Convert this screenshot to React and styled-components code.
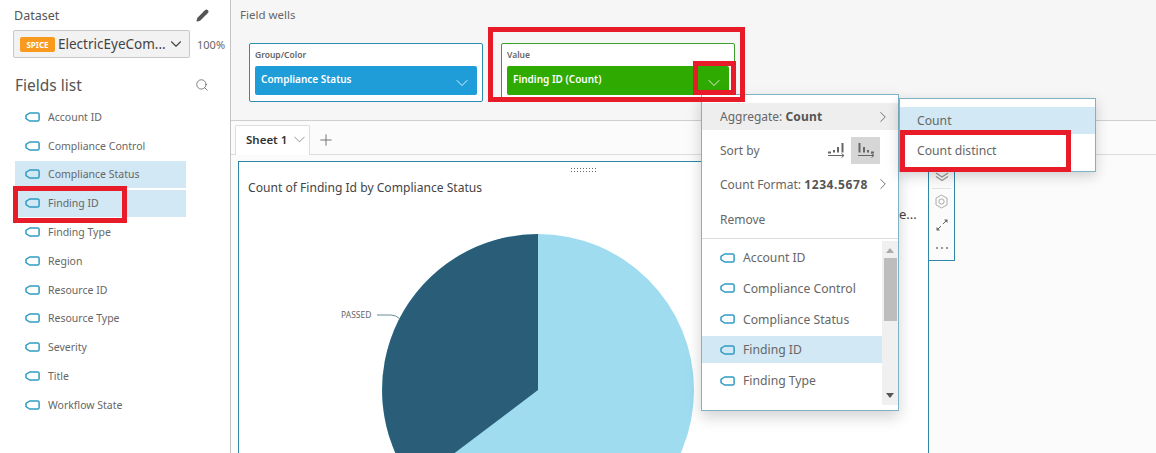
import React from "react";
import styled, { createGlobalStyle } from "styled-components";
import { ChevronDown, ChevronRight, Pencil, Plus, Search } from "lucide-react";

const fields = [
  "Account ID",
  "Compliance Control",
  "Compliance Status",
  "Finding ID",
  "Finding Type",
  "Region",
  "Resource ID",
  "Resource Type",
  "Severity",
  "Title",
  "Workflow State",
];

const menuFields = ["Account ID", "Compliance Control", "Compliance Status", "Finding ID", "Finding Type"];

const FieldIcon = () => (
  <svg width="15" height="10" viewBox="0 0 15 10" fill="none">
    <path d="M4.6 1H12.6a1.5 1.5 0 0 1 1.5 1.5V7.5a1.5 1.5 0 0 1-1.5 1.5H4.6L1 6.6V3.4Z" stroke="#2f9cc4" strokeWidth="1.5" strokeLinejoin="round" />
  </svg>
);

const SortAsc = () => (
  <svg width="18" height="18" viewBox="0 0 18 18" fill="none" stroke="#666">
    <path d="M1 14.5H17M14.5 12.5l2.5 2-2.5 2" strokeWidth="1" />
    <path d="M1 11.5h3M7 11.5V9M11 11.5V6M15.5 11.5V2" strokeWidth="2" />
  </svg>
);

const SortDesc = () => (
  <svg width="18" height="18" viewBox="0 0 18 18" fill="none" stroke="#666">
    <path d="M1 14.5H17M14.5 12.5l2.5 2-2.5 2" strokeWidth="1" />
    <path d="M2.5 11.5V2M7 11.5V6M11 11.5V9M14 11.5h3" strokeWidth="2" />
  </svg>
);

const DoubleChevron = () => (
  <svg width="14" height="10" viewBox="0 0 14 10" fill="none" stroke="#999" strokeWidth="1.3">
    <path d="M1 1l6 4 6-4M1 4.5l6 4 6-4" />
  </svg>
);

const HexIcon = () => (
  <svg width="13" height="15" viewBox="0 0 13 15" fill="none" stroke="#aaa" strokeWidth="1">
    <path d="M6.5 1L12 4.2V10.8L6.5 14 1 10.8V4.2Z" />
    <circle cx="6.5" cy="7.5" r="2.6" />
  </svg>
);

const ExpandIcon = () => (
  <svg width="12" height="12" viewBox="0 0 12 12" fill="#666" stroke="#666" strokeWidth="1">
    <path d="M7 5l4-4M1 11l4-4" />
    <path d="M8 .5h3.5V4ZM.5 8V11.5H4Z" strokeWidth="0" />
  </svg>
);

const DotsIcon = () => (
  <svg width="14" height="4" viewBox="0 0 14 4" fill="#777">
    <circle cx="2" cy="2" r="1" />
    <circle cx="7" cy="2" r="1" />
    <circle cx="12" cy="2" r="1" />
  </svg>
);

const App = () => (
  <Page>
    <GlobalStyle />
    <Sidebar>
      <DatasetHead>
        <span>Dataset</span>
        <Pencil size={13} fill="#555" color="#555" />
      </DatasetHead>
      <DatasetRow>
        <DatasetSelect>
          <Spice>SPICE</Spice>
          <DatasetName>ElectricEyeCom...</DatasetName>
          <ChevronDown size={18} strokeWidth={1.5} color="#444" />
        </DatasetSelect>
        <Zoom>100%</Zoom>
      </DatasetRow>
      <ListHead>
        <h2>Fields list</h2>
        <Search size={14} strokeWidth={1.4} color="#666" />
      </ListHead>
      <FieldList>
        {fields.map((f) => (
          <FieldRow key={f} $selected={f === "Compliance Status" || f === "Finding ID"}>
            <FieldIcon />
            <span>{f}</span>
          </FieldRow>
        ))}
      </FieldList>
      <Callout $x={13} $y={186} $w={114} $h={37} />
    </Sidebar>

    <Main>
      <Wells>
        <WellsTitle>Field wells</WellsTitle>
        <WellRow>
          <Well $color="#2b8db3">
            <WellLabel>Group/Color</WellLabel>
            <Pill $color="#1f9dd9">
              <span>Compliance Status</span>
              <ChevronDown size={20} strokeWidth={1} color="#fff" />
            </Pill>
          </Well>
          <Well $color="#3aa02a">
            <WellLabel>Value</WellLabel>
            <Pill $color="#2faa00">
              <span>Finding ID (Count)</span>
              <ChevronDown size={20} strokeWidth={1} color="#fff" />
            </Pill>
          </Well>
        </WellRow>
      </Wells>

      <Tabs>
        <Tab>
          <span>Sheet 1</span>
          <ChevronDown size={19} strokeWidth={1} color="#777" />
        </Tab>
        <AddSheet>
          <Plus size={18} strokeWidth={1.2} color="#666" />
        </AddSheet>
      </Tabs>

      <Canvas>
        <Visual>
          <DragHandle />
          <VisualTitle>Count of Finding Id by Compliance Status</VisualTitle>
          <Chart width="400" height="240" viewBox="0 0 400 240">
            <circle cx="238" cy="157" r="156" fill="#9fdcf0" />
            <path d="M238 157V1A156 156 0 0 0 113.6 251Z" fill="#2a5d78" />
            <text x="41" y="85" fontSize="8.5" fill="#666">PASSED</text>
            <path d="M77 82h14q5 0 9 4" fill="none" stroke="#6c8b99" />
          </Chart>
          <LegendText>e...</LegendText>
        </Visual>
        <VisualTools>
          <ToolCell $h={24} $divider><DoubleChevron /></ToolCell>
          <ToolCell $h={24}><HexIcon /></ToolCell>
          <ToolCell $h={24}><ExpandIcon /></ToolCell>
          <ToolCell $h={22}><DotsIcon /></ToolCell>
        </VisualTools>
      </Canvas>
    </Main>

    <Menu>
      <MenuRow $bg="#eeeeee" $h={27}>
        <span>Aggregate: <b>Count</b></span>
        <ChevronRight size={18} strokeWidth={1} color="#444" />
      </MenuRow>
      <SortRow>
        <span>Sort by</span>
        <SortIcons>
          <SortBtn><SortAsc /></SortBtn>
          <SortBtn $active><SortDesc /></SortBtn>
        </SortIcons>
      </SortRow>
      <MenuRow $h={28}>
        <span>Count Format: <FormatValue>1234.5678</FormatValue></span>
        <ChevronRight size={18} strokeWidth={1} color="#444" />
      </MenuRow>
      <RemoveRow>Remove</RemoveRow>
      <MenuList>
        <MenuItems>
          {menuFields.map((f) => (
            <MenuItem key={f} $selected={f === "Finding ID"}>
              <FieldIcon />
              <span>{f}</span>
            </MenuItem>
          ))}
        </MenuItems>
        <Scrollbar>
          <ScrollArrow $up />
          <ScrollTrack><ScrollThumb /></ScrollTrack>
          <ScrollArrow />
        </Scrollbar>
      </MenuList>
    </Menu>

    <SubMenu>
      <SubItem $selected>Count</SubItem>
      <SubItem>Count distinct</SubItem>
    </SubMenu>

    <Callout $x={488} $y={27} $w={257} $h={75} />
    <Callout $x={693} $y={61} $w={43} $h={34} />
    <Callout $x={900} $y={130} $w={171} $h={42} />
  </Page>
);

const GlobalStyle = createGlobalStyle`
  html, body {
    margin: 0;
    height: 453px;
    overflow: hidden;
    background: #fff;
  }
  * {
    box-sizing: border-box;
  }
`;

const Page = styled.div`
  position: relative;
  display: flex;
  width: 1156px;
  height: 453px;
  overflow: hidden;
  font-family: "Noto Sans", "Open Sans", sans-serif;
  color: #555;
`;

const Sidebar = styled.aside`
  width: 231px;
  flex: none;
  padding: 5px 0 0 13px;
  background: #fff;
  border-right: 1px solid #c4c4c4;
`;

const DatasetHead = styled.div`
  display: flex;
  justify-content: space-between;
  align-items: center;
  width: 196px;
  height: 20px;
  padding-left: 1px;
  font-size: 12.5px;
`;

const DatasetRow = styled.div`
  display: flex;
  align-items: center;
  margin-top: 5px;
  gap: 7px;
`;

const DatasetSelect = styled.div`
  display: flex;
  align-items: center;
  width: 177px;
  height: 28px;
  padding: 0 4px 0 6px;
  background: #f2f2f2;
  border: 1px solid #c8c8c8;
  border-radius: 2px;
`;

const Spice = styled.span`
  width: 35px;
  height: 15px;
  flex: none;
  background: #f79a1e;
  color: #fff;
  border-radius: 2px;
  font-size: 8px;
  font-weight: 700;
  line-height: 15px;
  text-align: center;
`;

const DatasetName = styled.span`
  flex: 1;
  margin-left: 3px;
  font-size: 13.5px;
  color: #444;
  white-space: nowrap;
`;

const Zoom = styled.span`
  font-size: 11px;
  color: #666;
`;

const ListHead = styled.div`
  display: flex;
  justify-content: space-between;
  align-items: center;
  width: 196px;
  margin-top: 15px;
  padding-left: 2px;
  h2 {
    margin: 0;
    font-size: 15.5px;
    line-height: 24px;
    font-weight: 400;
    color: #555;
  }
`;

const FieldList = styled.div`
  display: flex;
  flex-direction: column;
  margin: 6.4px 0 0 2px;
  width: 171px;
`;

const FieldRow = styled.div`
  display: flex;
  align-items: center;
  gap: 8px;
  height: 27px;
  margin-bottom: 1.8px;
  padding-left: 10px;
  font-size: 10.5px;
  color: #666;
  background: ${(p) => (p.$selected ? "#d2e8f5" : "transparent")};
`;

const Main = styled.main`
  flex: 1;
  display: flex;
  flex-direction: column;
  min-width: 0;
`;

const Wells = styled.section`
  height: 121px;
  flex: none;
  padding: 5px 0 0 9px;
  background: #f6f6f6;
  border-bottom: 1px solid #cfcfcf;
`;

const WellsTitle = styled.div`
  height: 20px;
  font-size: 11.5px;
  line-height: 20px;
  color: #666;
`;

const WellRow = styled.div`
  display: flex;
  gap: 18px;
  margin: 18px 0 0 9px;
`;

const Well = styled.div`
  width: 234px;
  height: 59px;
  padding: 4px 5px 0;
  background: #fff;
  border: 1px solid ${(p) => p.$color};
  border-radius: 2px;
`;

const WellLabel = styled.div`
  height: 18px;
  font-size: 8.5px;
  font-weight: 600;
  line-height: 14px;
  color: #666;
`;

const Pill = styled.div`
  display: flex;
  justify-content: space-between;
  align-items: center;
  height: 29px;
  padding: 0 5px 0 6px;
  background: ${(p) => p.$color};
  border-radius: 2px;
  color: #fff;
  font-size: 10px;
  font-weight: 600;
  span {
    margin-top: -3px;
  }
  svg {
    margin-top: 5px;
  }
`;

const Tabs = styled.div`
  display: flex;
  align-items: flex-end;
  gap: 6px;
  height: 34px;
  flex: none;
  padding-left: 4px;
  background: #fbfbfb;
  border-bottom: 1px solid #ddd;
`;

const Tab = styled.div`
  display: flex;
  align-items: center;
  justify-content: space-between;
  width: 75px;
  height: 30px;
  margin-bottom: -1px;
  padding: 0 0 2px 10px;
  background: #fff;
  border: 1px solid #ddd;
  border-bottom: 0;
  border-radius: 2px 2px 0 0;
  font-size: 11.5px;
  font-weight: 600;
  color: #333;
`;

const AddSheet = styled.div`
  display: flex;
  align-items: center;
  height: 29px;
  margin-left: 1px;
`;

const Canvas = styled.div`
  flex: 1;
  display: flex;
  align-items: flex-start;
  padding: 6px 0 0 7px;
  background: #fbfbfb;
`;

const Visual = styled.div`
  position: relative;
  width: 691px;
  height: 320px;
  flex: none;
  background: #fff;
  border: 1px solid #2f86a6;
  border-bottom: 0;
`;

const DragHandle = styled.div`
  position: absolute;
  left: 331px;
  top: 5px;
  width: 28px;
  height: 7px;
  background-image: radial-gradient(#666 0.9px, transparent 1px);
  background-size: 3px 3px;
`;

const VisualTitle = styled.div`
  margin: 17px 0 0 9px;
  height: 18px;
  font-size: 12.1px;
  line-height: 18px;
  color: #444;
`;

const Chart = styled.svg`
  display: block;
  margin: 36px 0 0 61px;
  overflow: visible;
`;

const LegendText = styled.div`
  position: absolute;
  left: 660px;
  top: 43px;
  font-size: 13px;
  color: #444;
`;

const VisualTools = styled.div`
  display: flex;
  flex-direction: column;
  width: 26px;
  height: 100px;
  padding: 3px 0 0;
  background: #fbfbfb;
  border: 1px solid #2f86a6;
  border-left: 0;
`;

const ToolCell = styled.div`
  display: flex;
  align-items: center;
  justify-content: center;
  height: ${(p) => p.$h}px;
  flex: none;
  margin: 0 3px;
  border-bottom: ${(p) => (p.$divider ? "1px solid #e2e2e2" : "0")};
`;

const Menu = styled.div`
  position: absolute;
  left: 701px;
  top: 94px;
  width: 198px;
  height: 317px;
  padding-top: 8px;
  background: #fff;
  border: 1px solid #7fb2c9;
  box-shadow: 0 6px 14px rgba(0, 0, 0, 0.18);
  font-size: 12px;
  color: #666;
  b {
    font-weight: 700;
    letter-spacing: 0.2px;
    color: #555;
  }
`;

const FormatValue = styled.b`
  && {
    letter-spacing: 0.6px;
  }
`;

const MenuRow = styled.div`
  display: flex;
  align-items: center;
  justify-content: space-between;
  height: ${(p) => p.$h}px;
  padding: 0 6px 0 18px;
  background: ${(p) => p.$bg || "transparent"};
`;

const RemoveRow = styled.div`
  display: flex;
  align-items: center;
  height: 40px;
  padding: 2px 0 0 18px;
`;

const SortRow = styled.div`
  display: flex;
  align-items: center;
  justify-content: space-between;
  height: 40px;
  padding: 0 18px 0 18px;
`;

const SortIcons = styled.div`
  display: flex;
  gap: 1px;
`;

const SortBtn = styled.div`
  display: flex;
  align-items: center;
  justify-content: center;
  width: 29px;
  height: 27px;
  background: ${(p) => (p.$active ? "#d6d6d6" : "transparent")};
`;

const MenuList = styled.div`
  display: flex;
  height: 172px;
  padding-top: 2px;
  border-top: 1px solid #ddd;
`;

const MenuItems = styled.div`
  flex: 1;
  padding-top: 3px;
`;

const MenuItem = styled.div`
  display: flex;
  align-items: center;
  gap: 8px;
  height: 27px;
  margin-bottom: 3.75px;
  padding-left: 18px;
  font-size: 12.2px;
  color: #666;
  background: ${(p) => (p.$selected ? "#d2e8f5" : "transparent")};
`;

const Scrollbar = styled.div`
  display: flex;
  flex-direction: column;
  width: 16px;
  height: 164px;
  background: #f0f0f0;
`;

const ScrollArrow = styled.div`
  width: 0;
  height: 0;
  flex: none;
  margin: ${(p) => (p.$up ? "7px auto 5px" : "5px auto 7px")};
  border-left: 4px solid transparent;
  border-right: 4px solid transparent;
  ${(p) => (p.$up ? "border-bottom: 5px solid #aaa;" : "border-top: 5px solid #555;")}
`;

const ScrollTrack = styled.div`
  flex: 1;
  padding: 0 1px 0 2px;
`;

const ScrollThumb = styled.div`
  height: 63px;
  background: #bdbdbd;
`;

const SubMenu = styled.div`
  position: absolute;
  left: 899px;
  top: 98px;
  width: 197px;
  height: 74px;
  padding-top: 8px;
  background: #fff;
  border: 1px solid #7fb2c9;
  box-shadow: 0 4px 12px rgba(0, 0, 0, 0.18);
`;

const SubItem = styled.div`
  display: flex;
  align-items: center;
  height: ${(p) => (p.$selected ? 27 : 32)}px;
  padding-left: 17px;
  font-size: 12.2px;
  color: #666;
  background: ${(p) => (p.$selected ? "#d2e8f5" : "transparent")};
`;

// red annotation boxes sit over the screenshot
const Callout = styled.div`
  position: absolute;
  left: ${(p) => p.$x}px;
  top: ${(p) => p.$y}px;
  width: ${(p) => p.$w}px;
  height: ${(p) => p.$h}px;
  border: 5px solid #e81c28;
  pointer-events: none;
`;

export default App;
